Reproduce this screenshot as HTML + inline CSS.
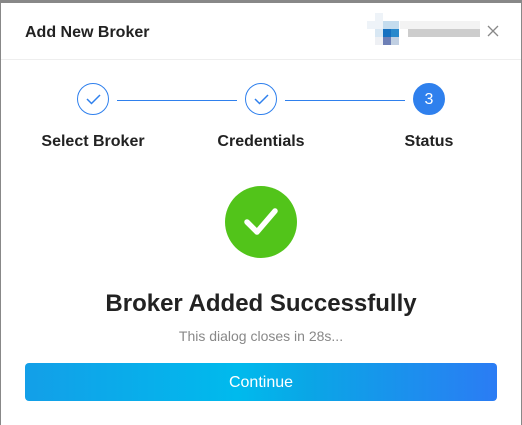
<!DOCTYPE html>
<html><head><style>
body{margin:0;width:522px;height:425px;overflow:hidden;background:#fff;font-family:"Liberation Sans",sans-serif;position:relative}
.frame{position:absolute;left:0;top:0;height:425px;border-left:1px solid #888;border-right:1px solid #888;border-top:3px solid #888;box-sizing:border-box;width:522px}
.t{position:absolute;white-space:nowrap}
.c{position:absolute;width:30px;height:30px;border:1px solid #2f80ed;border-radius:50%;box-sizing:content-box}
.ln{position:absolute;height:1px;background:#2f80ed;top:100px}
.lab{position:absolute;top:133px;font-size:16px;font-weight:bold;color:#222;width:160px;text-align:center}
.px{position:absolute;width:8px;height:8px}
</style></head><body>
<div class="frame"></div>
<div class="t" style="left:25px;top:24px;font-size:16px;font-weight:bold;color:#222">Add New Broker</div>
<div class="px" style="left:375px;top:13px;background:#eef3f8"></div>
<div class="px" style="left:367px;top:21px;background:#eef3f8;width:16px"></div>
<div class="px" style="left:383px;top:21px;background:#c4dcee"></div>
<div class="px" style="left:391px;top:21px;background:#c4dcee"></div>
<div class="px" style="left:375px;top:29px;background:#d8e7f3"></div>
<div class="px" style="left:383px;top:29px;background:#1570c0"></div>
<div class="px" style="left:391px;top:29px;background:#2888cc"></div>
<div class="px" style="left:375px;top:37px;background:#eef0f4"></div>
<div class="px" style="left:383px;top:37px;background:#6d7fb6"></div>
<div class="px" style="left:391px;top:37px;background:#c0cfe2"></div>
<div class="px" style="left:400px;top:21px;width:80px;background:#f3f3f3"></div>
<div class="px" style="left:408px;top:29px;width:72px;background:#cdcdcd"></div>
<svg style="position:absolute;left:487px;top:25px" width="12" height="12"><path d="M1 1L11 11M11 1L1 11" stroke="#888" stroke-width="1.3"/></svg>
<div style="position:absolute;left:1px;right:1px;top:59px;height:1px;background:#eee"></div>
<div class="c" style="left:77px;top:83px"><svg width="30" height="30"><path d="M9 15l4.5 4.5L22 11" fill="none" stroke="#2f80ed" stroke-width="1.5"/></svg></div>
<div class="c" style="left:245px;top:83px"><svg width="30" height="30"><path d="M9 15l4.5 4.5L22 11" fill="none" stroke="#2f80ed" stroke-width="1.5"/></svg></div>
<div class="c" style="left:413px;top:83px;background:#2f80ed;color:#fff;font-size:16px;text-align:center;line-height:32px">3</div>
<div class="ln" style="left:117px;width:120px"></div>
<div class="ln" style="left:285px;width:120px"></div>
<div class="lab" style="left:13px">Select Broker</div>
<div class="lab" style="left:181px">Credentials</div>
<div class="lab" style="left:349px">Status</div>
<div style="position:absolute;left:225px;top:186px;width:72px;height:72px;border-radius:50%;background:#52c41a"></div>
<svg style="position:absolute;left:225px;top:186px" width="72" height="72"><path d="M22 36l10 10L50 25" fill="none" stroke="#fff" stroke-width="5.5" stroke-linecap="round" stroke-linejoin="round"/></svg>
<div class="t" style="left:0;width:522px;text-align:center;top:290px;font-size:24px;font-weight:bold;color:#222">Broker Added Successfully</div>
<div class="t" style="left:0;width:522px;text-align:center;top:328px;font-size:14px;color:#888">This dialog closes in 28s...</div>
<div style="position:absolute;left:25px;top:363px;width:472px;height:38px;border-radius:4px;background:linear-gradient(90deg,#139fe8 0%,#00baed 45%,#0aa6e6 60%,#2b7cf4 100%);color:#fff;font-size:16px;text-align:center;line-height:40px">Continue</div>
</body></html>
